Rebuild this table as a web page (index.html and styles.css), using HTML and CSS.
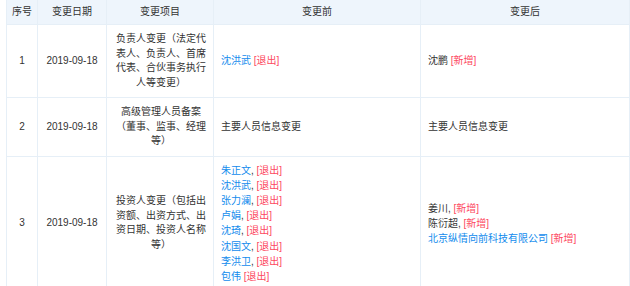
FILE: index.html
```html
<!DOCTYPE html>
<html lang="zh-CN">
<head>
<meta charset="utf-8">
<link rel="stylesheet" href="styles.css">
</head>
<body>
<table class="tbl">
  <colgroup>
    <col class="c1"><col class="c2"><col class="c3"><col class="c4"><col class="c5">
  </colgroup>
  <thead>
    <tr>
      <th>序号</th>
      <th>变更日期</th>
      <th>变更项目</th>
      <th>变更前</th>
      <th>变更后</th>
    </tr>
  </thead>
  <tbody>
    <tr>
      <td class="center">1</td>
      <td class="center">2019-09-18</td>
      <td class="center item">负责人变更（法定代表人、负责人、首席代表、合伙事务执行人等变更）</td>
      <td><a class="link">沈洪武</a> <span class="red">[退出]</span></td>
      <td>沈鹏 <span class="red">[新增]</span></td>
    </tr>
    <tr class="r2">
      <td class="center">2</td>
      <td class="center">2019-09-18</td>
      <td class="center item">高级管理人员备案（董事、监事、经理等）</td>
      <td>主要人员信息变更</td>
      <td>主要人员信息变更</td>
    </tr>
    <tr>
      <td class="center">3</td>
      <td class="center">2019-09-18</td>
      <td class="center item">投资人变更（包括出资额、出资方式、出资日期、投资人名称等）</td>
      <td class="list">
        <div><a class="link">朱正文</a>, <span class="red">[退出]</span></div>
        <div><a class="link">沈洪武</a>, <span class="red">[退出]</span></div>
        <div><a class="link">张力澜</a>, <span class="red">[退出]</span></div>
        <div><a class="link">卢娟</a>, <span class="red">[退出]</span></div>
        <div><a class="link">沈琦</a>, <span class="red">[退出]</span></div>
        <div><a class="link">沈国文</a>, <span class="red">[退出]</span></div>
        <div><a class="link">李洪卫</a>, <span class="red">[退出]</span></div>
        <div><a class="link">包伟</a> <span class="red">[退出]</span></div>
      </td>
      <td class="list">
        <div>姜川, <span class="red">[新增]</span></div>
        <div>陈衍超, <span class="red">[新增]</span></div>
        <div><a class="link">北京纵情向前科技有限公司</a> <span class="red">[新增]</span></div>
      </td>
    </tr>
  </tbody>
</table>
</body>
</html>
```

FILE: styles.css
```css
html, body {
  margin: 0;
  padding: 0;
  background: #ffffff;
}
body {
  padding-left: 6px;
  font-family: "Liberation Sans", "Noto Sans CJK SC", sans-serif;
  font-size: 10px;
  color: #333333;
}
.tbl {
  border-collapse: collapse;
  table-layout: fixed;
  width: 623px;
}
.c1 { width: 31px; }
.c2 { width: 69px; }
.c3 { width: 107px; }
.c4 { width: 207px; }
.c5 { width: 209px; }
.tbl th,
.tbl td {
  border: 1px solid #e6eff7;
  vertical-align: middle;
}
.tbl thead tr th {
  border-top: none;
}
.tbl th {
  background: #eef5fc;
  font-weight: normal;
  height: 24px;
  padding: 0 4px;
  text-align: center;
  line-height: 14px;
}
.tbl td {
  padding: 7px 7px;
  line-height: 14.5px;
  text-align: left;
}
.tbl td.center {
  text-align: center;
  padding-left: 4px;
  padding-right: 4px;
}
.tbl td.item {
  padding-left: 9px;
  padding-right: 7px;
}
.tbl td.list {
  line-height: 15.2px;
  padding-top: 6px;
  padding-bottom: 6px;
}
.link {
  color: #128bed;
  text-decoration: none;
}
.red {
  color: #fd485e;
}
```
